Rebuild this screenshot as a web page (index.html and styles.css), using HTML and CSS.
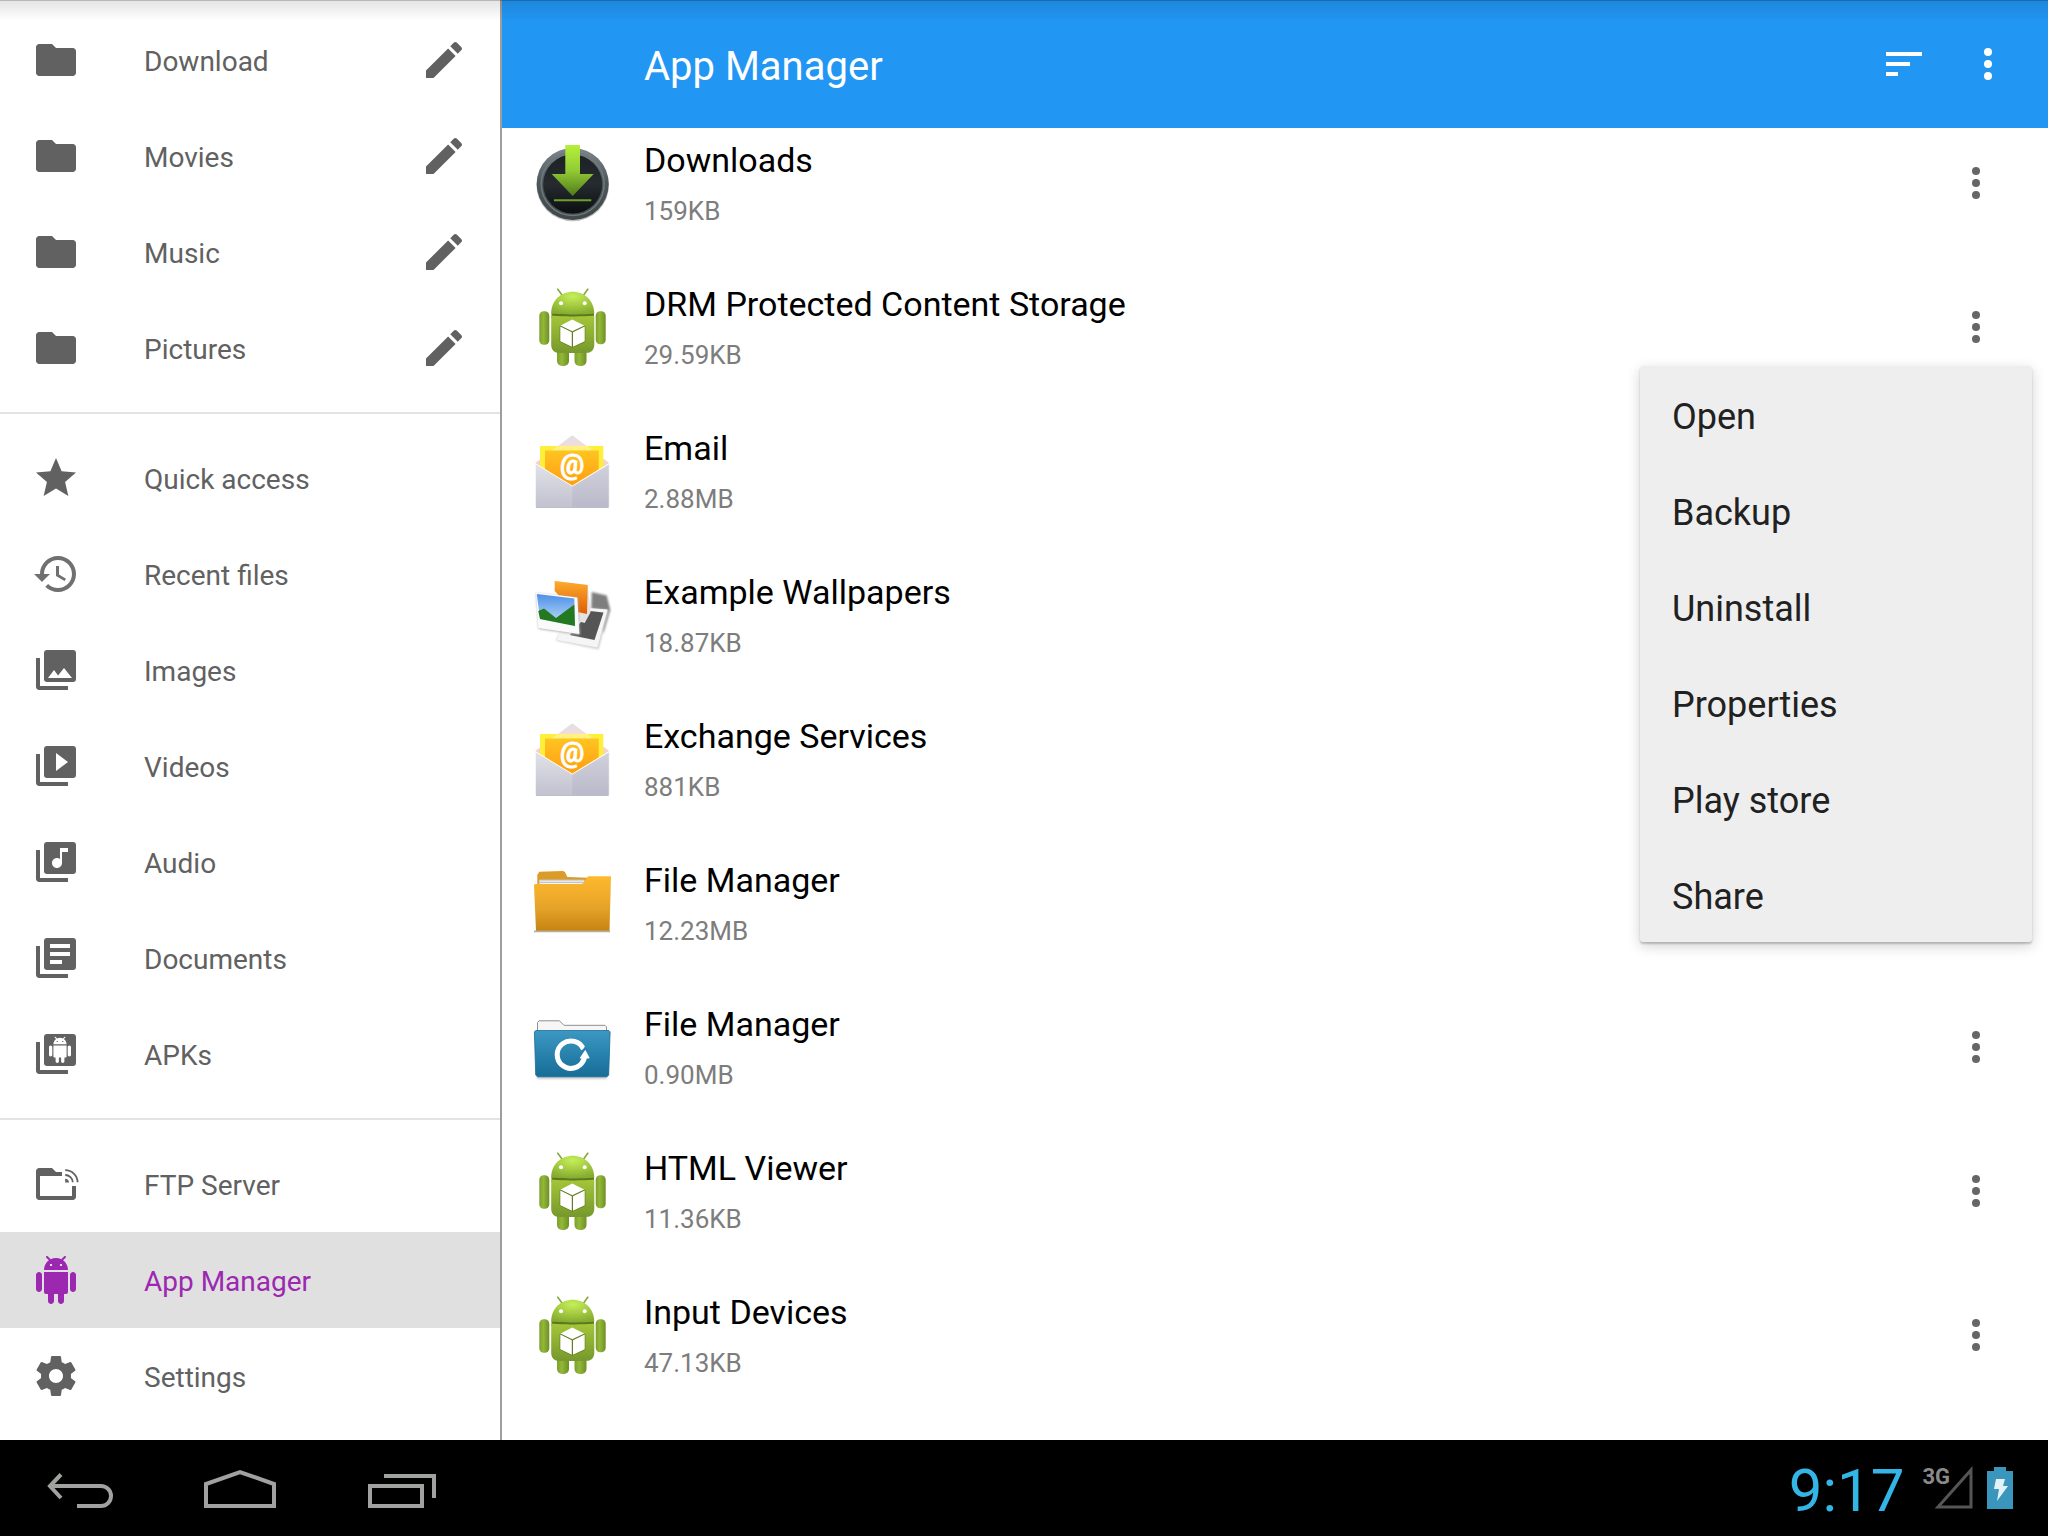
FILE: index.html
```html
<!DOCTYPE html>
<html lang="en">
<head>
  <meta charset="UTF-8" />
  <meta name="viewport" content="width=device-width, initial-scale=1.0"/>
  <title>App Manager</title>
  <link rel="stylesheet" href="styles.css">
</head>
<body>

<!-- Icon definitions -->
<svg class="defs" aria-hidden="true">
  <defs>
    <linearGradient id="g-green" x1="0" y1="0" x2="0" y2="1">
      <stop offset="0" stop-color="#a4c639"/><stop offset="1" stop-color="#76982c"/>
    </linearGradient>
    <radialGradient id="g-head" cx=".5" cy=".2" r=".8">
      <stop offset="0" stop-color="#c5ee58"/><stop offset="1" stop-color="#86ab2f"/>
    </radialGradient>
    <linearGradient id="g-limb" x1="0" y1="0" x2="1" y2="0">
      <stop offset="0" stop-color="#7d9f2e"/><stop offset=".4" stop-color="#93b836"/><stop offset="1" stop-color="#6d8f27"/>
    </linearGradient>
    <linearGradient id="g-ring" x1="0" y1="0" x2="0" y2="1">
      <stop offset="0" stop-color="#7d868b"/><stop offset=".5" stop-color="#4c5559"/><stop offset="1" stop-color="#3f484a"/>
    </linearGradient>
    <linearGradient id="g-dark" x1="0" y1="0" x2="0" y2="1">
      <stop offset="0" stop-color="#1c2126"/><stop offset=".5" stop-color="#252b2f"/><stop offset="1" stop-color="#0c0f11"/>
    </linearGradient>
    <linearGradient id="g-arrow" x1="0" y1="0" x2="0" y2="1">
      <stop offset="0" stop-color="#b4f03c"/><stop offset=".5" stop-color="#93cb33"/><stop offset="1" stop-color="#4f7a1d"/>
    </linearGradient>
    <linearGradient id="g-sheet" x1="0" y1="0" x2="0" y2="1">
      <stop offset="0" stop-color="#ffc423"/><stop offset="1" stop-color="#ff9a0c"/>
    </linearGradient>
    <linearGradient id="g-env" x1="0" y1="0" x2="0" y2="1">
      <stop offset="0" stop-color="#e2e2e8"/><stop offset="1" stop-color="#c2c2d0"/>
    </linearGradient>
    <linearGradient id="g-flap" x1="0" y1="0" x2="0" y2="1">
      <stop offset="0" stop-color="#dfdfe8"/><stop offset=".4" stop-color="#f5dcd6"/><stop offset="1" stop-color="#f3cfc0"/>
    </linearGradient>
    <linearGradient id="g-sky" x1="0" y1="0" x2="0" y2="1">
      <stop offset="0" stop-color="#4d8fe6"/><stop offset="1" stop-color="#c4e2fb"/>
    </linearGradient>
    <linearGradient id="g-orange" x1="0" y1="0" x2="0" y2="1">
      <stop offset="0" stop-color="#fdab2c"/><stop offset="1" stop-color="#e05c05"/>
    </linearGradient>
    <linearGradient id="g-folder" x1="0" y1="0" x2="0" y2="1">
      <stop offset="0" stop-color="#feb92e"/><stop offset=".6" stop-color="#e5a229"/><stop offset="1" stop-color="#c58311"/>
    </linearGradient>
    <linearGradient id="g-blue" x1="0" y1="0" x2="0" y2="1">
      <stop offset="0" stop-color="#3b98c2"/><stop offset="1" stop-color="#166d98"/>
    </linearGradient>
    <filter id="soft" x="-20%" y="-20%" width="140%" height="140%"><feGaussianBlur stdDeviation="1"/></filter>
  </defs>

  <symbol id="i-folder" viewBox="0 0 24 24"><path d="M10 4H3.600C2.700 4 2 4.700 2 5.600v12.800c0 .9.700 1.600 1.600 1.600h16.800c.9 0 1.600-.7 1.600-1.600V7.600c0-.9-.7-1.600-1.600-1.600H12z"/></symbol>
  <symbol id="i-edit" viewBox="0 0 24 24"><path d="M3 17.250V21h3.750L17.810 9.940l-3.750-3.750L3 17.250zM20.710 7.040c.39-.39.39-1.020 0-1.410l-2.340-2.340c-.39-.39-1.020-.39-1.410 0l-1.830 1.830 3.750 3.750 1.830-1.830z"/></symbol>
  <symbol id="i-star" viewBox="0 0 24 24"><path d="M12 17.270L18.180 21l-1.640-7.030L22 9.240l-7.190-.61L12 2 9.190 8.630 2 9.240l5.460 4.730L5.820 21z"/></symbol>
  <symbol id="i-history" viewBox="0 0 24 24"><path opacity=".9" d="M13 3c-4.970 0-9 4.030-9 9H1l3.890 3.890.07.14L9 12H6c0-3.870 3.130-7 7-7s7 3.130 7 7-3.130 7-7 7c-1.930 0-3.680-.79-4.940-2.060l-1.420 1.420C8.270 19.990 10.510 21 13 21c4.970 0 9-4.030 9-9s-4.030-9-9-9zm-1 5v5l4.280 2.540.72-1.210-3.500-2.080V8H12z"/></symbol>
  <symbol id="i-stack" viewBox="0 0 24 24"><rect x="6" y="2" width="16" height="16" rx="1.600"/><path d="M2 6v14.400c0 .9.700 1.600 1.600 1.600H18v-2H4V6z"/></symbol>
  <symbol id="i-images" viewBox="0 0 24 24"><use href="#i-stack"/><path fill="#fff" d="M11 12l2.030 2.710L16 11l4 5H8z"/></symbol>
  <symbol id="i-videos" viewBox="0 0 24 24"><use href="#i-stack"/><path fill="#fff" d="M12 14.500v-9l6 4.500z"/></symbol>
  <symbol id="i-audio" viewBox="0 0 24 24"><use href="#i-stack"/><path fill="#fff" d="M18 7h-3v5.500c0 1.380-1.120 2.500-2.500 2.500S10 13.880 10 12.500s1.120-2.500 2.500-2.500c.57 0 1.080.19 1.500.51V5h4z"/></symbol>
  <symbol id="i-docs" viewBox="0 0 24 24"><use href="#i-stack"/><path fill="#fff" d="M9 5h10v2H9zM9 9h10v2H9zM9 13h6v2H9z"/></symbol>
  <symbol id="i-android" viewBox="0 0 24 24"><path d="M6 18c0 .55.45 1 1 1h1v3.500c0 .83.67 1.500 1.500 1.500s1.500-.67 1.500-1.500V19h2v3.500c0 .83.67 1.500 1.500 1.500s1.500-.67 1.500-1.500V19h1c.55 0 1-.45 1-1V8H6v10zM3.500 8C2.670 8 2 8.670 2 9.500v7c0 .83.67 1.500 1.500 1.500S5 17.330 5 16.500v-7C5 8.670 4.330 8 3.500 8zm17 0c-.83 0-1.500.67-1.500 1.500v7c0 .83.67 1.500 1.500 1.500s1.500-.67 1.500-1.500v-7c0-.83-.67-1.500-1.500-1.500zm-4.970-5.840l1.300-1.300c.2-.2.2-.51 0-.71-.2-.2-.51-.2-.71 0l-1.480 1.480C13.850 1.230 12.950 1 12 1c-.96 0-1.860.23-2.660.63L7.850.15c-.2-.2-.51-.2-.71 0-.2.2-.2.51 0 .71l1.310 1.310C6.970 3.260 6 5.010 6 7h12c0-1.990-.97-3.750-2.470-4.840zM10 5H9V4h1v1zm5 0h-1V4h1v1z"/></symbol>
  <symbol id="i-apks" viewBox="0 0 24 24"><use href="#i-stack"/><use href="#i-android" x="7.400" y="3.300" width="13.200" height="13.200" fill="#fff"/></symbol>
  <symbol id="i-ftp" viewBox="0 0 24 24">
    <path d="M10 4H3.600C2.700 4 2 4.700 2 5.600v12.800c0 .9.700 1.600 1.600 1.600h16.800c.9 0 1.600-.7 1.600-1.600V13h-2v5H4V8h11V6h-3z"/>
    <path fill="none" stroke="currentColor" stroke-width=".9" d="M16.600 5.100a6.200 6.200 0 0 1 6.200 6M16.600 7.500a3.800 3.800 0 0 1 3.800 3.600"/>
    <path d="M16.600 9.400v1.800h1.900c0-1-.8-1.800-1.900-1.800z"/>
  </symbol>
  <symbol id="i-settings" viewBox="0 0 24 24"><path d="M19.430 12.980c.04-.32.07-.64.07-.98s-.03-.66-.07-.98l2.110-1.650c.19-.15.24-.42.12-.64l-2-3.460c-.12-.22-.39-.3-.61-.22l-2.490 1c-.52-.4-1.080-.73-1.690-.98l-.38-2.650C14.460 2.180 14.250 2 14 2h-4c-.25 0-.46.18-.49.42l-.38 2.650c-.61.25-1.170.59-1.690.98l-2.490-1c-.23-.09-.49 0-.61.22l-2 3.460c-.13.22-.07.49.12.64l2.110 1.650c-.04.32-.07.65-.07.98s.03.66.07.98l-2.110 1.650c-.19.15-.24.42-.12.64l2 3.460c.12.22.39.3.61.22l2.490-1c.52.4 1.080.73 1.690.98l.38 2.650c.03.24.24.42.49.42h4c.25 0 .46-.18.49-.42l.38-2.650c.61-.25 1.170-.59 1.690-.98l2.490 1c.23.09.49 0 .61-.22l2-3.460c.12-.22.07-.49-.12-.64l-2.110-1.650zM12 15.500c-1.930 0-3.500-1.570-3.500-3.500s1.570-3.500 3.500-3.500 3.500 1.570 3.500 3.500-1.570 3.500-3.500 3.500z"/></symbol>
  <symbol id="i-sort" viewBox="0 0 24 24"><path d="M3 18h6v-2H3v2zM3 6v2h18V6H3zm0 7h12v-2H3v2z"/></symbol>
  <symbol id="i-more" viewBox="0 0 24 24"><circle cx="12" cy="6" r="2"/><circle cx="12" cy="12" r="2"/><circle cx="12" cy="18" r="2"/></symbol>

  <!-- App icons -->
  <symbol id="a-downloads" viewBox="0 0 80 80">
    <circle cx="40.700" cy="42" r="36.300" fill="#000" opacity=".25"/>
    <circle cx="40.700" cy="41" r="36" fill="url(#g-ring)"/>
    <circle cx="40.700" cy="41" r="31.500" fill="none" stroke="#6f787b" stroke-width="1.500"/>
    <circle cx="40.700" cy="41" r="29.500" fill="url(#g-dark)"/>
    <path fill="url(#g-arrow)" d="M33.300 2H48v29h13.700l-21 22-21-22h13.600z"/>
    <path fill="#6da12b" d="M22 56.200h37.300v2H22z"/>
  </symbol>
  <symbol id="a-android" viewBox="0 0 80 80">
    <path stroke="#86a93a" stroke-width="1.600" stroke-linecap="round" d="M25.800 2.200l4.400 6M55.800 2.200l-4.400 6"/>
    <rect x="25" y="58" width="12" height="21" rx="5" fill="url(#g-limb)"/>
    <rect x="42.500" y="58" width="12" height="21" rx="5" fill="url(#g-limb)"/>
    <rect x="7.300" y="24.300" width="10" height="33.400" rx="4.500" fill="url(#g-limb)"/>
    <rect x="63.700" y="24.300" width="10" height="33" rx="4.500" fill="url(#g-limb)"/>
    <path fill="#5b7a1f" d="M19.500 26h42.500v5H19.500z"/>
    <path fill="url(#g-head)" d="M19.200 26.500C19.200 13.500 28.800 4.700 40.700 4.700s21.600 8.800 21.600 21.800c-10 1.200-33 1.200-43.100 0z"/>
    <path fill="url(#g-green)" d="M19.200 28.500c10 1.200 33 1.200 43.100 0V58c0 5-3.500 8-8 8H27.200c-4.500 0-8-3-8-8z"/>
    <circle cx="29" cy="16.300" r="2" fill="#fff"/><circle cx="52.700" cy="16.300" r="2" fill="#fff"/>
    <path fill="#5f7d22" d="M40.300 33l13 6.200v15.600l-13 6-12.600-6V39.200z"/>
    <path fill="#fff" d="M40.300 32.500l12 6-12 5.700-11.800-5.700zM28.300 39.500l11.500 5.700v14.500l-11.500-5.500zM52.700 39.500v14.700L41 59.700V45.200z"/>
  </symbol>
  <symbol id="a-email" viewBox="0 0 80 80">
    <path fill="url(#g-flap)" d="M3.200 32L40.300 4.300 77.200 32v4h-74z"/>
    <path fill="#ffee3a" d="M8 15h63.300v32H8z"/>
    <path fill="#fff3a0" d="M26 15h29l6.500 4.600H19.500z" opacity=".7"/>
    <path fill="url(#g-sheet)" d="M13 19.600h53.700V44L40.300 58 13 44z"/>
    <path fill="url(#g-env)" stroke="#fff" stroke-width="1" d="M3.200 32.500L40.300 55l36.900-22.500V75c0 .8-.5 1.300-1.300 1.300H4.500c-.8 0-1.300-.5-1.300-1.300z"/>
    <path fill="#9c9cb5" opacity=".22" d="M40.300 56l36.900-22.500V76H40.300z"/>
    <path fill="#a9a9b8" d="M4 75.700h72.700v1H4z"/>
  </symbol>
  <symbol id="a-wallpapers" viewBox="0 0 80 80">
    <path filter="url(#soft)" fill="#7e7e7e" d="M59.700 17l15 3.500 3.600 14.500-7 23-12-24z"/>
    <path filter="url(#soft)" fill="#d0d0d0" d="M54 33l23 2-10.500 39.500-42.500-9 3-6z"/>
    <path fill="#f5f5f5" d="M56 33l19.500 1.500L65.300 72.500 25 65l2-6z"/>
    <path fill="#555" d="M58 36l13.500 1.600L62.500 65 38 60z"/>
    <path fill="#e3e3e3" d="M22.700 6l33 4 3 27-6 11-14-4z"/>
    <path fill="url(#g-orange)" d="M22.700 6l33 4-.7 29-14-3-18.300-20z"/>
    <path filter="url(#soft)" fill="#b5b5b5" d="M4 18l41.500 5 2.500 37L6.500 54z"/>
    <path fill="#fafafa" d="M4 17.600l41.300 5L47.300 59 6.300 53z"/>
    <path fill="url(#g-sky)" d="M4.800 19l37.500 4.500.7 27.500-35-7z"/>
    <path fill="#23791f" d="M6.300 36l5.700-2.500 12 9.500 18.300-13.500L43 51 8 44z"/>
  </symbol>
  <symbol id="a-folder" viewBox="0 0 80 80">
    <path fill="#777" opacity=".6" d="M2 67.500h76v1.800H2z"/>
    <path fill="#dc9a26" d="M5.300 24V12l2-3.200L31 8l2 1 2.300 5 20.700.8V24z"/>
    <path fill="#f6f6f6" d="M7.300 16.800h45V22h-45z"/>
    <path stroke="#a6a6a6" stroke-width=".8" d="M7.300 17h45M7.300 19.300h45"/>
    <path fill="url(#g-folder)" d="M2 22.300l1-1.200h46.500l2-1.100 3.500-5.700 1.500-1H79l-1.500 54.500H4z"/>
  </symbol>
  <symbol id="a-sync" viewBox="0 0 80 80">
    <path filter="url(#soft)" fill="#999" opacity=".5" d="M5 66h70v6H5z"/>
    <path fill="#f6f6f6" stroke="#8f8f8f" d="M5.500 25V15.500l1.500-1.700h20.500L32 18.300h41l1.500 1.500V25z"/>
    <path fill="url(#g-blue)" stroke="#1a6c94" stroke-width=".8" d="M2.400 25l1.300-1.500h73.200l1.200 1.500-1.400 43-1.700 1.800H5.500L3.700 68z"/>
    <path fill="none" stroke="#fff" stroke-width="5" d="M51.300 53.500a13.700 13.700 0 1 1 .2-11.200"/>
    <path fill="#fff" d="M53.300 42.800l4.500 8.400-3 .2c-.6 2.400-1.600 4.200-3 5.600L48.600 54l.8-2.600-1.800-.2z"/>
    <path fill="none" stroke="#2681ac" stroke-width="1.400" d="M47.600 48.500l5.500-8 3 4.500"/>
  </symbol>
</svg>

<div class="workspace">
  <nav class="drawer">
    <ul class="drawer-group">
      <li class="drawer-item"><a href="#"><svg class="icon"><use href="#i-folder"/></svg><span>Download</span></a><button class="icon-button" aria-label="Rename Download"><svg class="icon"><use href="#i-edit"/></svg></button></li>
      <li class="drawer-item"><a href="#"><svg class="icon"><use href="#i-folder"/></svg><span>Movies</span></a><button class="icon-button" aria-label="Rename Movies"><svg class="icon"><use href="#i-edit"/></svg></button></li>
      <li class="drawer-item"><a href="#"><svg class="icon"><use href="#i-folder"/></svg><span>Music</span></a><button class="icon-button" aria-label="Rename Music"><svg class="icon"><use href="#i-edit"/></svg></button></li>
      <li class="drawer-item"><a href="#"><svg class="icon"><use href="#i-folder"/></svg><span>Pictures</span></a><button class="icon-button" aria-label="Rename Pictures"><svg class="icon"><use href="#i-edit"/></svg></button></li>
    </ul>
    <ul class="drawer-group">
      <li class="drawer-item"><a href="#"><svg class="icon"><use href="#i-star"/></svg><span>Quick access</span></a></li>
      <li class="drawer-item"><a href="#"><svg class="icon"><use href="#i-history"/></svg><span>Recent files</span></a></li>
      <li class="drawer-item"><a href="#"><svg class="icon"><use href="#i-images"/></svg><span>Images</span></a></li>
      <li class="drawer-item"><a href="#"><svg class="icon"><use href="#i-videos"/></svg><span>Videos</span></a></li>
      <li class="drawer-item"><a href="#"><svg class="icon"><use href="#i-audio"/></svg><span>Audio</span></a></li>
      <li class="drawer-item"><a href="#"><svg class="icon"><use href="#i-docs"/></svg><span>Documents</span></a></li>
      <li class="drawer-item"><a href="#"><svg class="icon"><use href="#i-apks"/></svg><span>APKs</span></a></li>
    </ul>
    <ul class="drawer-group">
      <li class="drawer-item"><a href="#"><svg class="icon"><use href="#i-ftp"/></svg><span>FTP Server</span></a></li>
      <li class="drawer-item active"><a href="#" aria-current="page"><svg class="icon"><use href="#i-android"/></svg><span>App Manager</span></a></li>
      <li class="drawer-item"><a href="#"><svg class="icon"><use href="#i-settings"/></svg><span>Settings</span></a></li>
    </ul>
  </nav>

  <main class="content">
    <header class="toolbar">
      <h1>App Manager</h1>
      <button class="icon-button" aria-label="Sort"><svg class="icon"><use href="#i-sort"/></svg></button>
      <button class="icon-button" aria-label="More options"><svg class="icon"><use href="#i-more"/></svg></button>
    </header>

    <ul class="app-list">
      <li class="app">
        <svg class="app-icon"><use href="#a-downloads"/></svg>
        <div class="app-text"><h2>Downloads</h2><p>159KB</p></div>
        <button class="icon-button" aria-label="Downloads options"><svg class="icon"><use href="#i-more"/></svg></button>
      </li>
      <li class="app">
        <svg class="app-icon"><use href="#a-android"/></svg>
        <div class="app-text"><h2>DRM Protected Content Storage</h2><p>29.59KB</p></div>
        <button class="icon-button" aria-label="DRM Protected Content Storage options" aria-expanded="true"><svg class="icon"><use href="#i-more"/></svg></button>
        <div class="menu" role="menu">
          <button role="menuitem">Open</button>
          <button role="menuitem">Backup</button>
          <button role="menuitem">Uninstall</button>
          <button role="menuitem">Properties</button>
          <button role="menuitem">Play store</button>
          <button role="menuitem">Share</button>
        </div>
      </li>
      <li class="app">
        <svg class="app-icon" viewBox="0 0 80 80"><use href="#a-email"/><text class="at" x="40" y="43">@</text></svg>
        <div class="app-text"><h2>Email</h2><p>2.88MB</p></div>
        <button class="icon-button" aria-label="Email options"><svg class="icon"><use href="#i-more"/></svg></button>
      </li>
      <li class="app">
        <svg class="app-icon"><use href="#a-wallpapers"/></svg>
        <div class="app-text"><h2>Example Wallpapers</h2><p>18.87KB</p></div>
        <button class="icon-button" aria-label="Example Wallpapers options"><svg class="icon"><use href="#i-more"/></svg></button>
      </li>
      <li class="app">
        <svg class="app-icon" viewBox="0 0 80 80"><use href="#a-email"/><text class="at" x="40" y="43">@</text></svg>
        <div class="app-text"><h2>Exchange Services</h2><p>881KB</p></div>
        <button class="icon-button" aria-label="Exchange Services options"><svg class="icon"><use href="#i-more"/></svg></button>
      </li>
      <li class="app">
        <svg class="app-icon"><use href="#a-folder"/></svg>
        <div class="app-text"><h2>File Manager</h2><p>12.23MB</p></div>
        <button class="icon-button" aria-label="File Manager options"><svg class="icon"><use href="#i-more"/></svg></button>
      </li>
      <li class="app">
        <svg class="app-icon"><use href="#a-sync"/></svg>
        <div class="app-text"><h2>File Manager</h2><p>0.90MB</p></div>
        <button class="icon-button" aria-label="File Manager options"><svg class="icon"><use href="#i-more"/></svg></button>
      </li>
      <li class="app">
        <svg class="app-icon"><use href="#a-android"/></svg>
        <div class="app-text"><h2>HTML Viewer</h2><p>11.36KB</p></div>
        <button class="icon-button" aria-label="HTML Viewer options"><svg class="icon"><use href="#i-more"/></svg></button>
      </li>
      <li class="app">
        <svg class="app-icon"><use href="#a-android"/></svg>
        <div class="app-text"><h2>Input Devices</h2><p>47.13KB</p></div>
        <button class="icon-button" aria-label="Input Devices options"><svg class="icon"><use href="#i-more"/></svg></button>
      </li>
    </ul>
  </main>
</div>

<footer class="system-bar">
  <button class="system-button" aria-label="Back">
    <svg viewBox="0 0 160 96"><path d="M61 34.500L50 46l11 12M50 46h51a10 10 0 0 1 0 20H77"/></svg>
  </button>
  <button class="system-button" aria-label="Home">
    <svg viewBox="0 0 160 96"><path d="M46 66V44l34-12 34 12v22z"/></svg>
  </button>
  <button class="system-button" aria-label="Recent apps">
    <svg viewBox="0 0 160 96"><path d="M50 46h52v20H50zM64 36h50v22"/></svg>
  </button>
  <div class="status">
    <time class="clock">9:17</time>
    <span class="network">3G</span>
    <svg class="signal" viewBox="0 0 40 44"><path d="M37 4v37H4z"/></svg>
    <svg class="battery" viewBox="0 0 28 44"><path fill="#3a96bd" d="M8 1h12v4h7v38H1V5h7z"/><path fill="#e4f1f6" d="M10 13h9l-2 7h5L11 35l2-12H8z"/></svg>
  </div>
</footer>

</body>
</html>
```
FILE: styles.css
```css
* {
  box-sizing: border-box;
}
body {
  font-family: Roboto, sans-serif;
  background: white;
  margin: 0;
  height: 100vh;
  display: flex;
  flex-direction: column;
  overflow: hidden;
}
/* shadow under the top edge of the screen */
body::before {
  content: "";
  position: absolute;
  top: 0;
  left: 0;
  right: 0;
  height: 20px;
  border-top: 1px solid rgba(0,0,0,0.28);
  background: linear-gradient(rgba(0,0,0,0.1), transparent);
  z-index: 2;
  pointer-events: none;
}
ul {
  list-style: none;
  margin: 0;
  padding: 0;
}
h1, h2, p {
  margin: 0;
  font-weight: 400;
}
button {
  font-family: inherit;
  background: none;
  border: none;
  padding: 0;
  color: inherit;
  cursor: pointer;
}
.defs {
  position: absolute;
  width: 0;
  height: 0;
}
.icon {
  width: 48px;
  height: 48px;
  fill: currentColor;
  display: block;
  flex-shrink: 0;
}
.workspace {
  flex: 1;
  display: flex;
  min-height: 0;
}

/* Drawer */
.drawer {
  width: 502px;
  flex-shrink: 0;
  border-right: 2px solid #9e9e9e;
  overflow: hidden;
  color: #616161;
}
.drawer-group {
  padding: 16px 0;
}
.drawer-group:first-child {
  padding-top: 12px;
}
.drawer-group + .drawer-group {
  border-top: 2px solid #e3e3e3;
}
.drawer-item {
  display: flex;
  align-items: center;
  height: 96px;
  padding: 0 32px;
}
.drawer-item a {
  flex: 1;
  display: flex;
  align-items: center;
  gap: 64px;
  color: inherit;
  text-decoration: none;
  font-size: 28px;
}
.drawer-item span {
  padding-top: 2px;
}
.drawer-item.active {
  background: #e0e0e0;
  color: #9c27b0;
}

/* Content */
.content {
  flex: 1;
  min-width: 0;
  overflow: hidden;
}
.toolbar {
  display: flex;
  align-items: center;
  gap: 36px;
  height: 128px;
  padding: 0 36px 0 142px;
  background: #2196f3;
  color: white;
}
.toolbar h1 {
  flex: 1;
  font-size: 40px;
  padding-top: 4px;
}
.app-list {
  display: flex;
  flex-direction: column;
  gap: 54px;
  padding-top: 10px;
}
.app {
  position: relative;
  display: flex;
  align-items: center;
  gap: 32px;
  height: 90px;
  padding: 0 48px 0 30px;
  color: #666;
}
.app-icon {
  width: 80px;
  height: 80px;
  flex-shrink: 0;
}
.at {
  font-size: 27px;
  font-weight: 500;
  text-anchor: middle;
  fill: white;
  stroke: white;
  stroke-width: 1;
}
.app-text {
  flex: 1;
  padding-top: 4px;
}
.app-text h2 {
  font-size: 34px;
  line-height: 52px;
  color: black;
}
.app-text p {
  font-size: 26px;
  line-height: 50px;
  color: #7d7d7d;
}

/* Popup menu */
.menu {
  position: absolute;
  top: 84px;
  right: 16px;
  width: 392px;
  display: flex;
  flex-direction: column;
  background: #eee;
  border-radius: 3px;
  box-shadow: 0 2px 2px rgba(0,0,0,0.2), 0 4px 14px rgba(0,0,0,0.18);
  z-index: 1;
}
.menu button {
  height: 96px;
  padding: 6px 32px 0;
  text-align: left;
  font-size: 36px;
  color: #212121;
}

/* System bar */
.system-bar {
  display: flex;
  height: 96px;
  background: black;
}
.system-button {
  width: 160px;
}
.system-button svg {
  display: block;
  fill: none;
  stroke: #a0a2a0;
  stroke-width: 4;
}
.status {
  margin-left: auto;
  display: flex;
  align-items: center;
  padding-right: 34px;
}
.clock {
  font-size: 60px;
  color: #33b5e5;
  padding: 4px 18px 0 0;
}
.network {
  align-self: flex-start;
  padding-top: 24px;
  font-size: 22px;
  font-weight: 700;
  color: #8a8a8a;
}
.signal {
  width: 40px;
  height: 44px;
  margin: 0 12px 0 -16px;
  fill: none;
  stroke: #555;
  stroke-width: 3;
}
.battery {
  width: 28px;
  height: 44px;
}
```
